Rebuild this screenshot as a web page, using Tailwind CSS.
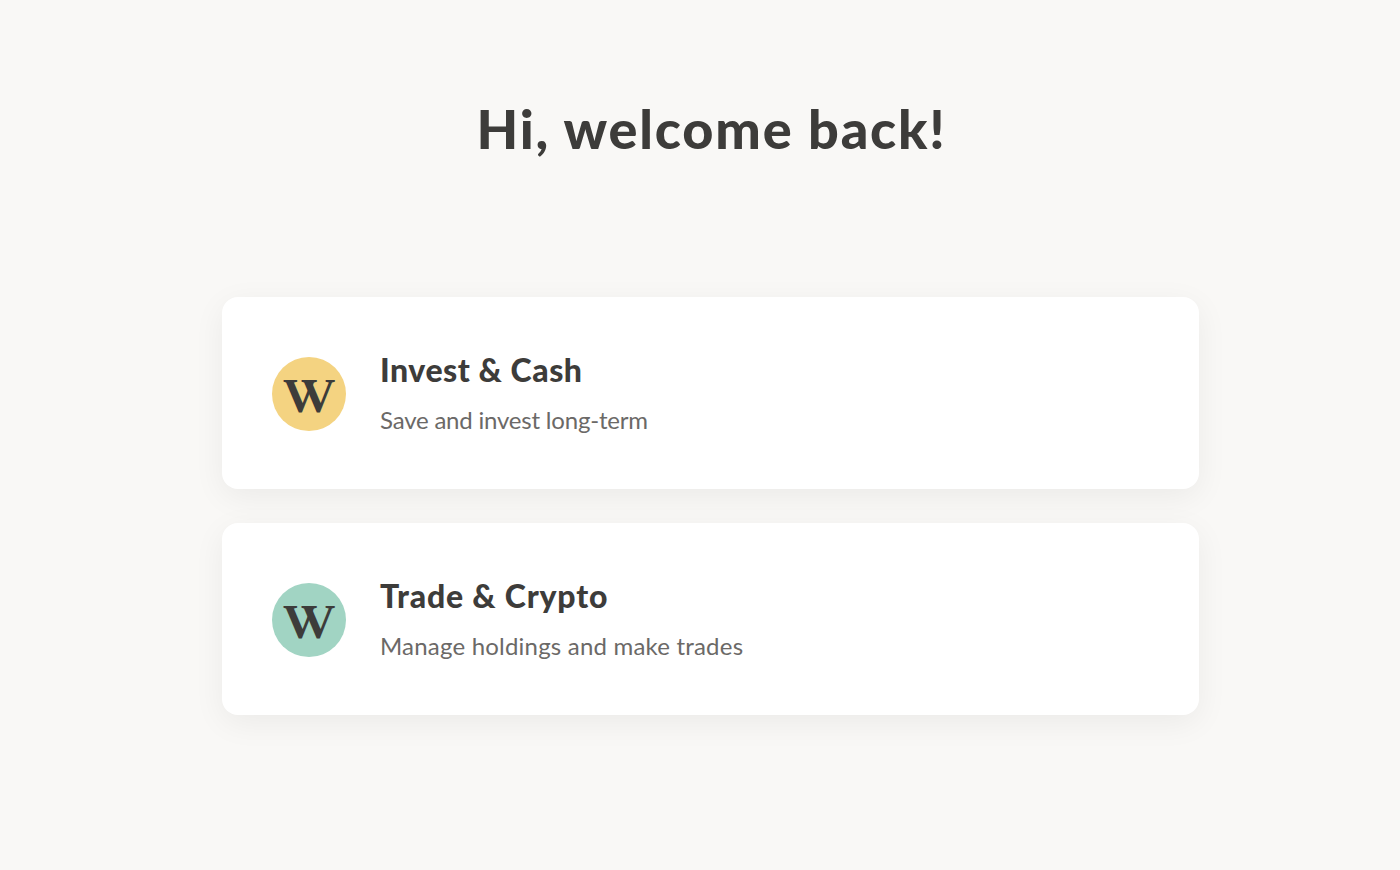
<!DOCTYPE html>
<html lang="en">
<head>
    <meta charset="UTF-8">
    <meta name="viewport" content="width=device-width, initial-scale=1.0">
    <title>Welcome back</title>
    <script src="https://cdn.jsdelivr.net/npm/@tailwindcss/browser@4"></script>
</head>
<body class="min-h-screen bg-[#f9f8f6] font-['Lato',sans-serif] text-[#3d3c3a]">
    <main class="ml-[222px] w-[977px] pt-[99px]">
        <h1 class="pl-[2px] text-center whitespace-nowrap text-[54px] leading-[60px] font-black tracking-[1.8px]">Hi, welcome back!</h1>

        <!-- Accounts -->
        <div class="mt-[138px] flex flex-col gap-[34px]">
            <a href="#" class="flex items-center h-[192px] px-[50px] gap-[34px] bg-white rounded-2xl shadow-[0_8px_32px_rgba(0,0,0,0.06)]">
                <svg class="w-[74px] h-[74px] shrink-0 mt-[2px]" viewBox="0 0 74 74" role="img" aria-label="W">
                    <circle cx="37" cy="37" r="37" fill="#f4d381"/>
                    <text x="11 29" y="55" font-family="Liberation Serif, serif" font-weight="700" font-size="47.5" fill="#3d3c3a">VV</text>
                </svg>
                <div class="whitespace-nowrap pt-[2px]">
                    <h2 class="text-[32px] leading-[40px] font-black tracking-[0.55px]">Invest &amp; Cash</h2>
                    <p class="mt-[12px] text-[24px] leading-[36px] tracking-[-0.2px] text-[#6b6967]">Save and invest long-term</p>
                </div>
            </a>
            <a href="#" class="flex items-center h-[192px] px-[50px] gap-[34px] bg-white rounded-2xl shadow-[0_8px_32px_rgba(0,0,0,0.06)]">
                <svg class="w-[74px] h-[74px] shrink-0 mt-[2px]" viewBox="0 0 74 74" role="img" aria-label="W">
                    <circle cx="37" cy="37" r="37" fill="#a1d4c3"/>
                    <text x="11 29" y="55" font-family="Liberation Serif, serif" font-weight="700" font-size="47.5" fill="#3d3c3a">VV</text>
                </svg>
                <div class="whitespace-nowrap pt-[2px]">
                    <h2 class="text-[32px] leading-[40px] font-black tracking-[0.8px]">Trade &amp; Crypto</h2>
                    <p class="mt-[12px] text-[24px] leading-[36px] tracking-[0.2px] text-[#6b6967]">Manage holdings and make trades</p>
                </div>
            </a>
        </div>
    </main>
</body>
</html>
